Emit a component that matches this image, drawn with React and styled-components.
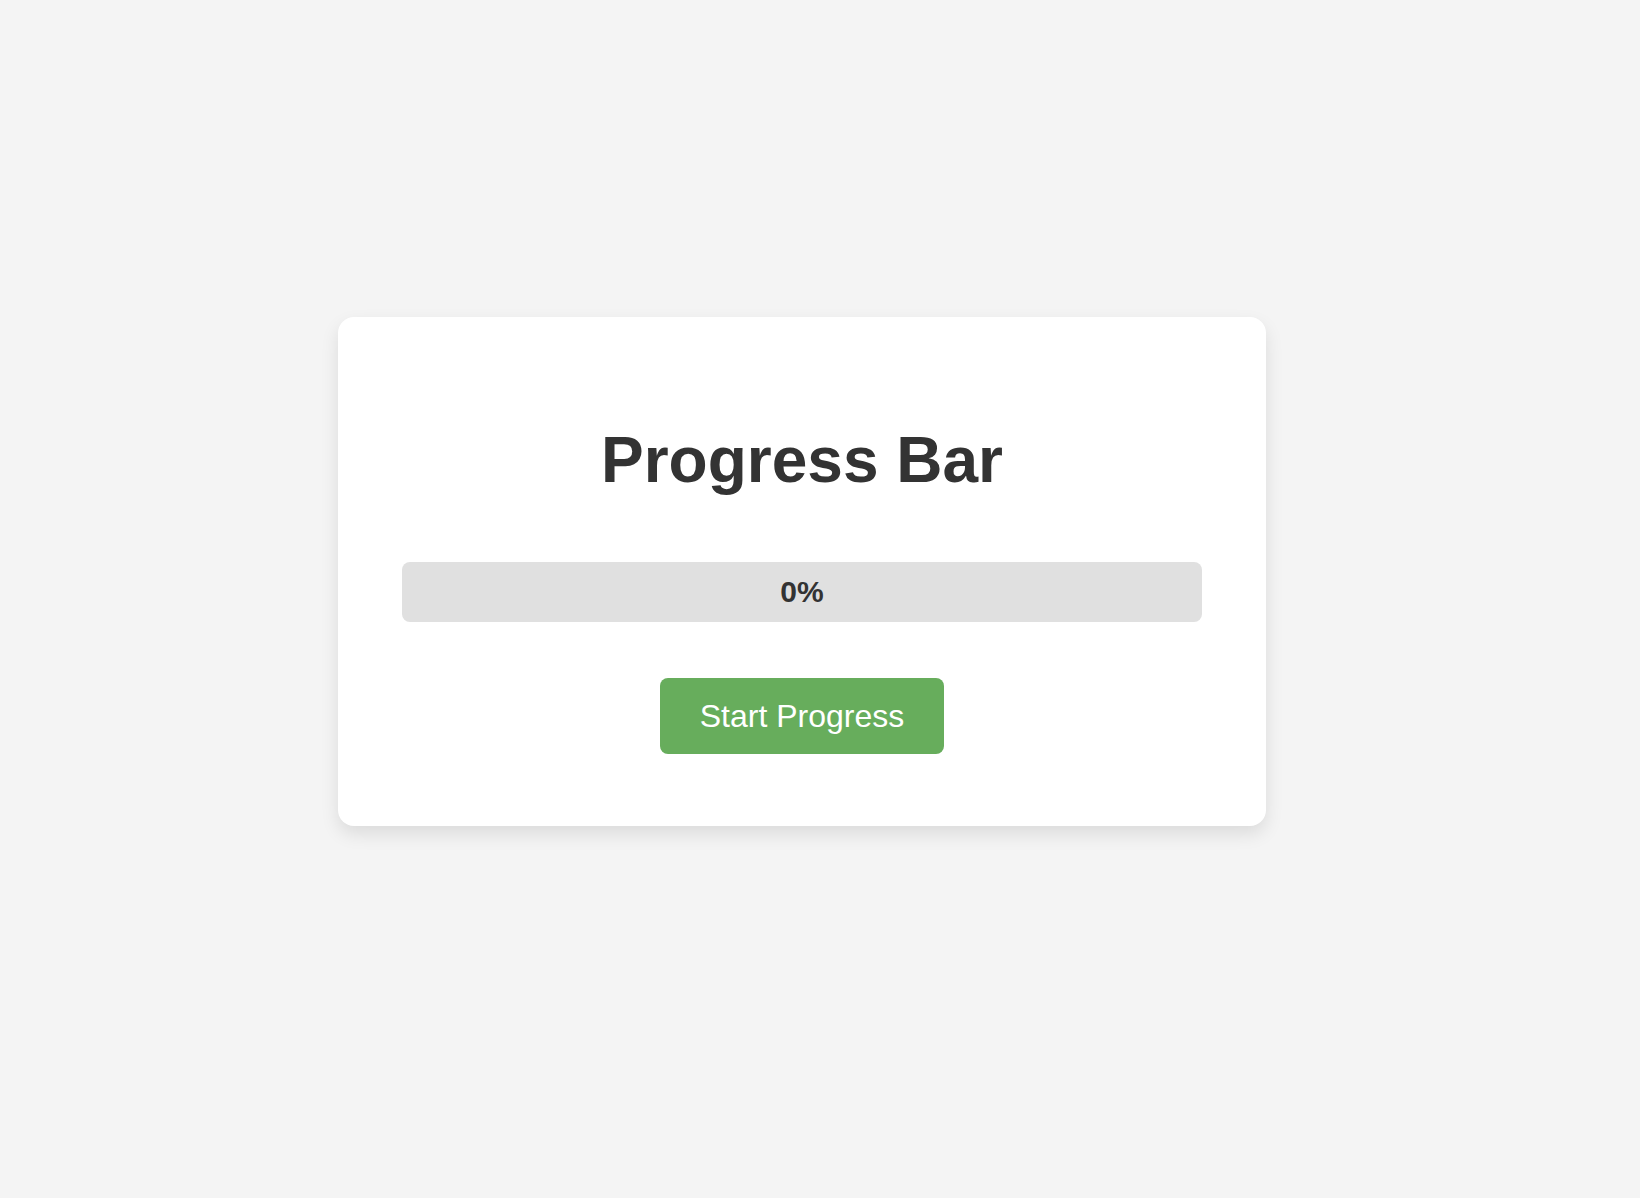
import { useState, useEffect } from "react";
import styled, { createGlobalStyle } from "styled-components";

const GlobalStyle = createGlobalStyle`
	html, body {
		margin: 0;
		padding: 0;
		background-color: #f4f4f4;
		font-family: "Liberation Sans", Arial, sans-serif;
	}
`;

const Page = styled.div`
	min-height: 100vh;
	box-sizing: border-box;
	display: flex;
	justify-content: center;
	align-items: flex-start;
	padding: 317px 36px 0 0;
`;

const Card = styled.div`
	width: 800px;
	padding: 107px 64px 72px;
	background-color: #ffffff;
	border-radius: 16px;
	box-shadow: 0 8px 18px rgba(0, 0, 0, 0.1);
	display: flex;
	flex-direction: column;
	align-items: center;
`;

const Title = styled.h1`
	margin: 0;
	font-size: 64px;
	line-height: 72px;
	font-weight: 700;
	color: #333333;
`;

const Track = styled.div`
	width: 100%;
	height: 60px;
	margin-top: 66px;
	background-color: #e0e0e0;
	border-radius: 8px;
	overflow: hidden;
	display: grid;
	grid-template-areas: "stack";
`;

const Fill = styled.div`
	grid-area: stack;
	height: 100%;
	background-color: #67ad5c;
	transition: width 0.2s ease;
`;

const Label = styled.span`
	grid-area: stack;
	align-self: center;
	justify-self: center;
	font-size: 30px;
	font-weight: 700;
	color: #333333;
`;

const Button = styled.button`
	margin-top: 56px;
	padding: 20px 40px;
	border: none;
	border-radius: 8px;
	background-color: #67ad5c;
	color: #ffffff;
	font-family: "Liberation Sans", Arial, sans-serif;
	font-size: 32px;
	line-height: 36px;
	cursor: pointer;
	&:hover {
		background-color: #5c9e52;
	}
`;

const App = () => {
	const [progress, setProgress] = useState(0);
	const [running, setRunning] = useState(false);

	useEffect(() => {
		if (!running) return;
		const timer = setInterval(() => {
			setProgress((p) => {
				if (p >= 100) {
					setRunning(false);
					return 100;
				}
				return p + 1;
			});
		}, 50);
		return () => clearInterval(timer);
	}, [running]);

	const handleStart = () => {
		setProgress(0);
		setRunning(true);
	};

	return (
		<Page>
			<GlobalStyle />
			<Card>
				<Title>Progress Bar</Title>
				<Track>
					<Fill style={{ width: progress + "%" }} />
					<Label>{progress}%</Label>
				</Track>
				<Button onClick={handleStart}>Start Progress</Button>
			</Card>
		</Page>
	);
};

export default App;
